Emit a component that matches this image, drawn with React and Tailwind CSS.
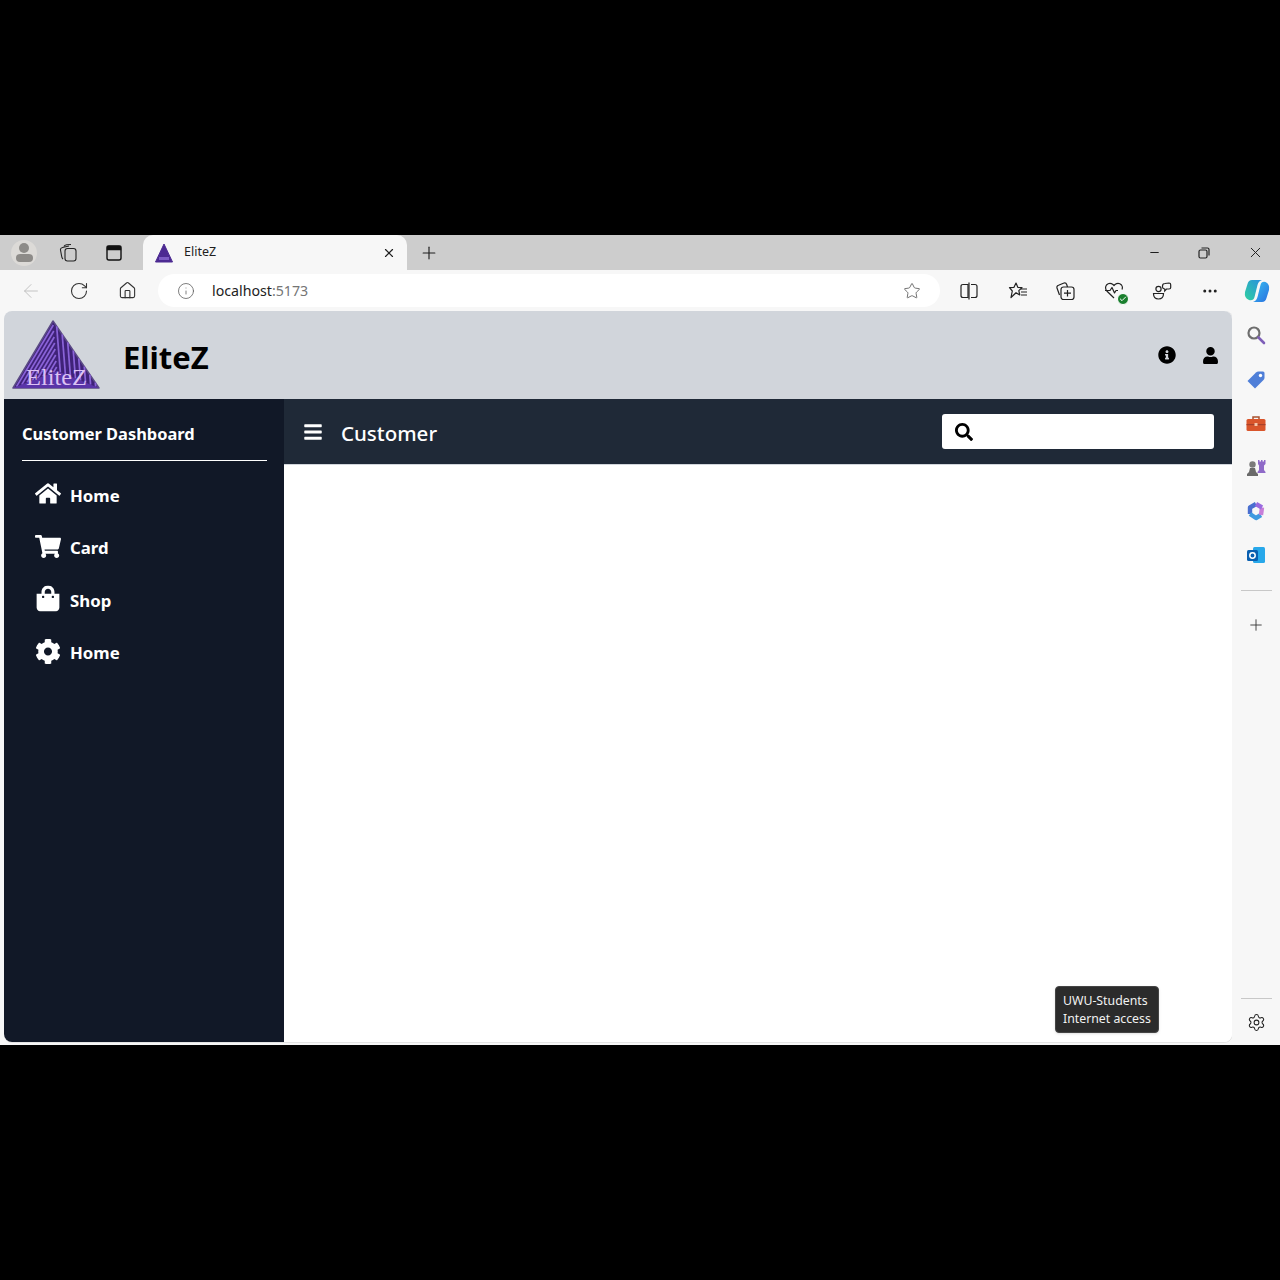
import React from 'react';
import { FaHome, FaShoppingCart, FaShoppingBag, FaCog, FaBars, FaSearch, FaInfoCircle, FaUser } from 'react-icons/fa';
import { ArrowLeft, RotateCw, House, Info, Star, Plus, X, Minus, Settings, MoreHorizontal, Check } from 'lucide-react';

const A = [41, 1];
const B = [1, 68];
const C = [87, 68];
const O = [45, 51];
const STEPS = [0.08, 0.2, 0.32, 0.44, 0.56, 0.68, 0.8, 0.92];

const lerp = (p, q, t) => [p[0] + (q[0] - p[0]) * t, p[1] + (q[1] - p[1]) * t];

function stripe(p1, q1, p2, q2, t) {
  const from = lerp(p1, q1, t);
  const to = lerp(p2, q2, t);
  return `M${from[0]} ${from[1]} L${to[0]} ${to[1]}`;
}

function Logo() {
  return (
    <svg viewBox="0 0 88 70" className="w-[88px] h-[70px]">
      <polygon points="41,1 1,68 87,68" fill="#3f2278" stroke="#5b4a86" strokeWidth="1.5" strokeLinejoin="round" />
      <g stroke="#8a63d8" strokeWidth="1.7" fill="none">
        {STEPS.map((t) => <path key={t} d={stripe(A, O, B, O, t)} />)}
        {STEPS.map((t) => <path key={t} d={stripe(A, C, O, C, t)} />)}
      </g>
      <polygon points="1,68 45,51 87,68" fill="#5a34a8" />
      <text x="14" y="65" fontSize="23" fontFamily="'Liberation Serif', serif" fill="#dcc2f4" textLength="61" lengthAdjust="spacingAndGlyphs">EliteZ</text>
    </svg>
  );
}

function Favicon() {
  return (
    <svg viewBox="0 0 18 20" className="w-[18px] h-[20px]">
      <polygon points="9,1 0.5,19 17.5,19" fill="#4c2a92" stroke="#4c2a92" strokeLinejoin="round" />
      <rect x="4" y="14" width="10" height="3" fill="#7d5cc4" />
    </svg>
  );
}

function NavItem({ icon: Icon, label }) {
  return (
    <div className="flex items-center h-[52.5px] pl-[13px]">
      <div className="w-[35px] flex justify-start -translate-y-[1.5px]">
        <Icon className="text-[26px]" />
      </div>
      <span className="text-[16.8px] font-bold">{label}</span>
    </div>
  );
}

function TabBar() {
  return (
    <div className="h-[35px] bg-[#cdcdcd] flex items-center text-[#1f1f1f] shrink-0">
      <div className="w-[143px] flex items-center pl-[11px]">
        <div className="w-[26px] h-[26px] rounded-full bg-[#dcdad7] flex flex-col items-center justify-center">
          <div className="w-[10px] h-[10px] rounded-full bg-[#8d8b88]" />
          <div className="w-[17px] h-[8px] rounded-full bg-[#8d8b88] mt-[1px]" />
        </div>
        <svg viewBox="0 0 20 20" className="w-[20px] h-[20px] ml-[21px]" fill="none" stroke="#222" strokeWidth="1.1">
          <rect x="7" y="5.5" width="11" height="12.5" rx="2.5" />
          <path d="M5 16 Q3.8 15 3.6 13 L2.5 7 Q2.2 5 4.5 4.5 L11 3" />
          <path d="M6 3.5 Q6.5 2 8.5 1.7 L13 1.5" />
        </svg>
        <svg viewBox="0 0 20 20" className="w-[20px] h-[20px] ml-[26px]" fill="none" stroke="#111" strokeWidth="1.4">
          <rect x="3" y="3" width="14" height="14" rx="2" />
          <path d="M3.5 3.5 H16.5 V6.5 H3.5 Z" fill="#111" />
        </svg>
      </div>
      <div className="w-[264px] h-[35px] bg-[#f7f7f7] rounded-t-[10px] flex items-center pl-[12px] pr-[11px]">
        <Favicon />
        <span className="ml-[11px] text-[12.5px] flex-1">EliteZ</span>
        <X size={14} strokeWidth={2} />
      </div>
      <Plus size={20} strokeWidth={1.4} className="ml-[12px]" />
      <div className="flex-1" />
      <Minus size={13} strokeWidth={2} className="mr-[37px]" />
      <svg viewBox="0 0 12 12" className="w-[12px] h-[12px] mr-[37px]" fill="none" stroke="#222" strokeWidth="1.2">
        <rect x="1" y="3" width="8" height="8" rx="1.5" />
        <path d="M3.5 1 H9.5 Q11 1 11 2.5 V8.5" />
      </svg>
      <X size={17} strokeWidth={1.4} className="mr-[16px]" />
    </div>
  );
}

function ToolBar() {
  return (
    <div className="h-[41px] bg-[#f7f7f7] flex items-center shrink-0 text-[#333]">
      <ArrowLeft size={22} strokeWidth={1} className="ml-[20px] text-[#bdbdbd]" />
      <RotateCw size={20} strokeWidth={1.3} className="ml-[27px]" />
      <House size={19} strokeWidth={1.4} className="ml-[29px]" />
      <div className="ml-[21px] w-[782px] h-[33px] bg-white rounded-full flex items-center pl-[19px] pr-[19px]">
        <Info size={18} strokeWidth={1} className="text-[#555]" />
        <span className="ml-[17px] text-[14.2px] text-[#222]">localhost<span className="text-[#757575]">:5173</span></span>
        <div className="flex-1" />
        <Star size={18} strokeWidth={1.1} className="text-[#555]" />
      </div>
      <svg viewBox="0 0 20 20" className="w-[20px] h-[20px] ml-[19px]" fill="none" stroke="#222" strokeWidth="1.2">
        <path d="M9 3.5 H4 Q2 3.5 2 5.5 V14.5 Q2 16.5 4 16.5 H9 Z" />
        <path d="M12 3.5 H16 Q18 3.5 18 5.5 V14.5 Q18 16.5 16 16.5 H12" />
        <path d="M10 1.5 V18.5" />
      </svg>
      <svg viewBox="0 0 20 20" className="w-[20px] h-[20px] ml-[29px]" fill="none" stroke="#222" strokeWidth="1.2" strokeLinejoin="round">
        <path d="M8 2 L9.8 6.3 L14 6.7 L10.8 9.6 L11.8 14 L8 11.7 L3 16.5 L4.3 10 L1.5 6.7 L6 6.3 Z" />
        <path d="M13 8 H19 M13 11 H19 M13 14 H19" />
      </svg>
      <svg viewBox="0 0 20 20" className="w-[20px] h-[20px] ml-[27px]" fill="none" stroke="#222" strokeWidth="1.2">
        <rect x="6" y="6" width="13" height="12.5" rx="2.5" />
        <path d="M12.5 9 V15.5 M9 12.2 H16" />
        <path d="M4.5 14 L2 7 Q1.5 5 3.5 4.3 L9 2 Q11 1.5 11.7 3.5 L12.5 6" />
      </svg>
      <div className="relative ml-[29px] w-[20px] h-[20px]">
        <svg viewBox="0 0 20 20" className="w-[20px] h-[20px]" fill="none" stroke="#222" strokeWidth="1.2" strokeLinejoin="round">
          <path d="M10 17 L2.8 10 Q0.5 7 2.5 4 Q5.5 1 9 3.5 L10 4.5 L11 3.5 Q14.5 1 17.5 4 Q19 6 18 8.5" />
          <path d="M1 9.5 H6 L8 6.5 L10.5 12 L12 9.5 H14" />
        </svg>
        <div className="absolute right-[-5px] bottom-[-4px] w-[12px] h-[12px] rounded-full bg-[#1a7f2e] border border-white flex items-center justify-center">
          <Check size={8} strokeWidth={3} className="text-white" />
        </div>
      </div>
      <svg viewBox="0 0 20 20" className="w-[20px] h-[20px] ml-[28px]" fill="none" stroke="#222" strokeWidth="1.2">
        <circle cx="6.5" cy="8" r="2.6" />
        <path d="M1.5 12.5 H11.5 Q11.5 18 6.5 18 Q1.5 18 1.5 12.5 Z" />
        <path d="M10.5 5 Q10.5 2.5 13 2.5 L17 2 Q18.7 2 18.7 3.7 V6.5 Q18.7 8 17 8 L14.5 8 L12.7 10 V8 Q10.5 7.7 10.5 6 Z" />
      </svg>
      <MoreHorizontal size={18} strokeWidth={2} className="ml-[29px] text-[#222]" />
    </div>
  );
}

function SideRail() {
  return (
    <div className="w-[48px] flex flex-col items-center bg-[#f7f7f7] shrink-0">
      <div className="flex flex-col items-center gap-[24px] mt-[14px]">
        <svg viewBox="0 0 20 20" className="w-[20px] h-[20px]" fill="none">
          <circle cx="8" cy="8" r="5.5" stroke="#6e6e6e" strokeWidth="2.2" />
          <path d="M12.5 12.5 L18 18" stroke="#7e5fb8" strokeWidth="2.6" strokeLinecap="round" />
        </svg>
        <svg viewBox="0 0 20 20" className="w-[20px] h-[20px] translate-y-[1px]">
          <path d="M1.5 11 L10 2.5 Q11 1.5 12.5 1.5 L17 1.5 Q18.5 1.5 18.5 3 L18.5 7.5 Q18.5 9 17.5 10 L9 18.5 Z" fill="#4f7fd8" />
          <circle cx="14.5" cy="5.5" r="1.7" fill="#fff" />
        </svg>
        <svg viewBox="0 0 20 20" className="w-[20px] h-[20px] translate-y-[1px]">
          <path d="M7 5 V3 H13 V5" fill="none" stroke="#a9512e" strokeWidth="1.5" />
          <rect x="0.5" y="5" width="19" height="12" rx="1.5" fill="#d9552b" />
          <rect x="0.5" y="10" width="19" height="1.2" fill="#a9412a" />
          <rect x="8.5" y="9" width="3" height="3" fill="#f5c6a8" />
        </svg>
        <svg viewBox="0 0 20 20" className="w-[20px] h-[20px]">
          <path d="M12 3 H13.5 V4.5 H15 V3 H16.5 V4.5 H18 V3 H19.5 V7 L18 8.5 V13 L19.5 15 V16 H11.5 V15 L13 13 V8.5 L12 7 Z" fill="#8f6ac8" />
          <circle cx="6.5" cy="7.5" r="3.2" fill="#7a7a7a" />
          <path d="M4 11 H9 L10 15 L12 17 V19 H1 V17 L3 15 Z" fill="#6a6a6a" />
        </svg>
        <svg viewBox="0 0 20 20" className="w-[20px] h-[20px]" fill="none">
          <path d="M10 3 L4 6.5 V13" stroke="#4a6fd0" strokeWidth="4.4" strokeLinejoin="round" />
          <path d="M4 13 L10 17 L15 14" stroke="#3f9ae0" strokeWidth="4.4" strokeLinejoin="round" />
          <path d="M15 14 L16 6.5" stroke="#c77fd8" strokeWidth="4.4" />
          <path d="M16 6.5 L10 3" stroke="#9a6ae0" strokeWidth="4.4" />
        </svg>
        <svg viewBox="0 0 20 20" className="w-[20px] h-[20px]">
          <rect x="7" y="2" width="12" height="16" rx="1.5" fill="#28a8ea" />
          <rect x="1" y="5" width="11" height="11" rx="1.5" fill="#0a5fb0" />
          <circle cx="6.5" cy="10.5" r="2.7" fill="none" stroke="#fff" strokeWidth="1.5" />
        </svg>
      </div>
      <div className="w-[31px] h-px bg-[#c8c8c8] mt-[25px]" />
      <Plus size={18} strokeWidth={1.2} className="mt-[25px] text-[#333]" />
      <div className="flex-1" />
      <div className="w-[31px] h-px bg-[#c8c8c8]" />
      <Settings size={19} strokeWidth={1.3} className="mt-[14px] mb-[13px] text-[#222]" />
    </div>
  );
}

export default function App() {
  return (
    <div className="h-[1280px] bg-black flex flex-col justify-center font-['Noto_Sans',sans-serif]">
      <div className="h-[810px] flex flex-col relative">
        <TabBar />
        <ToolBar />
        <div className="flex-1 flex bg-[#f7f7f7] min-h-0">
          <div className="w-[4px] shrink-0" />
          <div className="flex-1 flex flex-col mb-[3px] rounded-[8px] overflow-hidden bg-white shadow-[0_1px_0_#e4e4e4,1px_0_0_#e4e4e4]">
            <div className="h-[88px] bg-[#d1d5db] flex items-center pl-[8px] pr-[13px] shrink-0 text-black">
              <Logo />
              <span className="ml-[23px] mt-[4px] text-[31px] font-bold">EliteZ</span>
              <div className="flex-1" />
              <FaInfoCircle className="text-[18px] mr-[26px]" />
              <FaUser className="text-[17px]" />
            </div>
            <div className="flex-1 flex min-h-0">
              <div className="w-[280px] bg-[#111827] text-white pl-[18px] pr-[17px] shrink-0">
                <div className="text-[16.4px] font-bold pt-[23px] pb-[13px] border-b border-white">Customer Dashboard</div>
                <div className="mt-[8.5px]">
                  <NavItem icon={FaHome} label="Home" />
                  <NavItem icon={FaShoppingCart} label="Card" />
                  <NavItem icon={FaShoppingBag} label="Shop" />
                  <NavItem icon={FaCog} label="Home" />
                </div>
              </div>
              <div className="flex-1 flex flex-col bg-white">
                <div className="h-[66px] bg-[#1f2937] flex items-center pl-[19px] pr-[18px] text-white border-b border-[#d1d5db]">
                  <FaBars className="text-[20px]" />
                  <span className="ml-[18px] mt-[4px] text-[20.5px] font-medium">Customer</span>
                  <div className="flex-1" />
                  <div className="w-[272px] h-[35px] bg-white rounded-[3px] flex items-center pl-[13px]">
                    <FaSearch className="text-[18px] text-black" />
                  </div>
                </div>
              </div>
            </div>
          </div>
          <SideRail />
        </div>
        <div className="absolute left-[1055px] top-[751px] w-[104px] h-[47px] bg-[#2b2b2b] border border-[#444] rounded-[4px] text-[#f2f2f2] text-[12.3px] leading-[18px] pt-[5px] pl-[7px] shadow">
          <div>UWU-Students</div>
          <div>Internet access</div>
        </div>
        <div className="absolute left-[1244px] top-[44px] w-[26px] h-[24px]">
          <svg viewBox="0 0 26 24" className="w-[26px] h-[24px]">
            <defs>
              <linearGradient id="cpA" x1="0" y1="0" x2="1" y2="1">
                <stop offset="0" stopColor="#35c1f1" />
                <stop offset="1" stopColor="#2a6fe0" />
              </linearGradient>
              <linearGradient id="cpB" x1="0" y1="1" x2="1" y2="0">
                <stop offset="0" stopColor="#2fd0a0" />
                <stop offset="1" stopColor="#2a8fe0" />
              </linearGradient>
            </defs>
            <path d="M8 1 H18 Q14.5 2 13.5 6 L10.5 18 Q9.5 22 5 21 Q0 19 1 13 L3.5 5 Q4.5 1 8 1 Z" fill="url(#cpB)" />
            <path d="M18 23 H9 Q12.5 22 13.5 18 L16.5 6 Q17.5 2 21.5 3 Q26 5 25 11 L22.5 19 Q21.5 23 18 23 Z" fill="url(#cpA)" />
          </svg>
        </div>
      </div>
    </div>
  );
}
